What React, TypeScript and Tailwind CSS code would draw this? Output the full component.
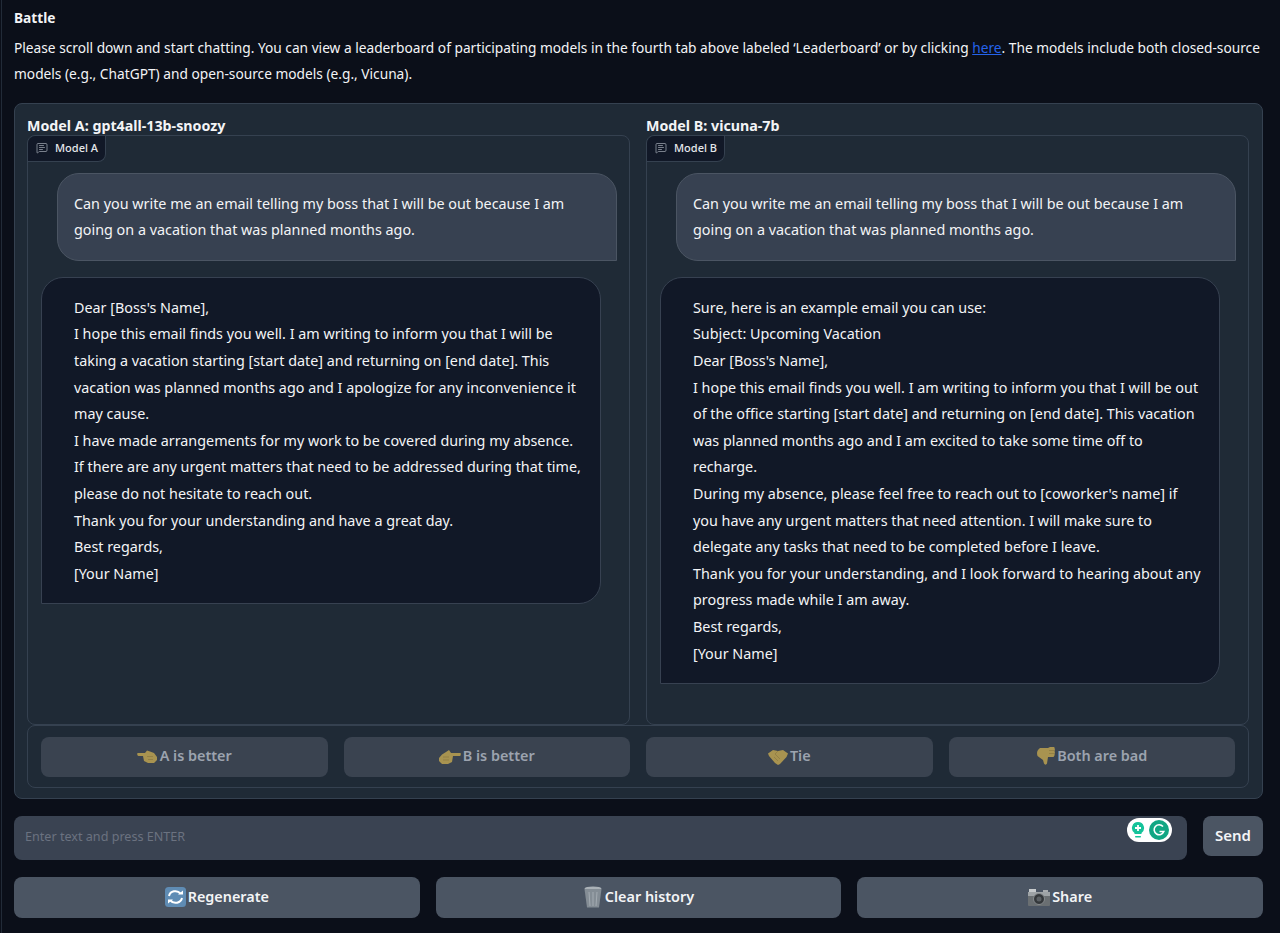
import { MessageSquareText } from "lucide-react";

const userLines = [
  "Can you write me an email telling my boss that I will be out because I am",
  "going on a vacation that was planned months ago.",
];

const linesA = [
  "Dear [Boss's Name],",
  "I hope this email finds you well. I am writing to inform you that I will be",
  "taking a vacation starting [start date] and returning on [end date]. This",
  "vacation was planned months ago and I apologize for any inconvenience it",
  "may cause.",
  "I have made arrangements for my work to be covered during my absence.",
  "If there are any urgent matters that need to be addressed during that time,",
  "please do not hesitate to reach out.",
  "Thank you for your understanding and have a great day.",
  "Best regards,",
  "[Your Name]",
];

const linesB = [
  "Sure, here is an example email you can use:",
  "Subject: Upcoming Vacation",
  "Dear [Boss's Name],",
  "I hope this email finds you well. I am writing to inform you that I will be out",
  "of the office starting [start date] and returning on [end date]. This vacation",
  "was planned months ago and I am excited to take some time off to",
  "recharge.",
  "During my absence, please feel free to reach out to [coworker's name] if",
  "you have any urgent matters that need attention. I will make sure to",
  "delegate any tasks that need to be completed before I leave.",
  "Thank you for your understanding, and I look forward to hearing about any",
  "progress made while I am away.",
  "Best regards,",
  "[Your Name]",
];

function HandLeft() {
  return (
    <svg width="21" height="18" viewBox="0 0 21 18">
      <path d="M0.500 5h7.500l2-2.500 3 1 4 1.500 3 4v3l-3 3h-6l-4-2-1-5H1.500C0 8 0 5.500 0.500 5z" fill="#a89350" />
      <path d="M10 8.500h6M11 11.500h5" stroke="#8a7840" strokeWidth="0.700" />
    </svg>
  );
}

function HandRight() {
  return (
    <svg width="22" height="18" viewBox="0 0 22 18">
      <path d="M21.500 5h-9.500l-2-3-3 2-4 2.500L0 10v3l3 3h6l4-2 1-6h7c1 0 1-3 .5-3z" fill="#a89350" />
      <path d="M4 9h6M4 12h6" stroke="#8a7840" strokeWidth="0.700" />
    </svg>
  );
}

function Handshake() {
  return (
    <svg width="20" height="17" viewBox="0 0 20 17">
      <path d="M0 5.500l5-3.500 5 1 5-1 5 3.500-1.500 3.500-6.500 7-2 1-3-2-6-7z" fill="#a89350" />
      <path d="M7 6l5 5M6 9l4 4M10 3L7 6" stroke="#8a7840" strokeWidth="0.700" fill="none" />
    </svg>
  );
}

function ThumbDown() {
  return (
    <svg width="19" height="19" viewBox="0 0 19 19">
      <path d="M4 1h8l2-1h3.500c1 0 1 .5 1 1 .500 1 .500 2 0 3 .500 1 .500 2 0 3 .500 1 0 2-1 3h-5.500l-1 6.500c-.500 1.500-2.500 1.500-3 0L7 13 1.500 9C.500 6 1 3 4 1z" fill="#a89350" />
      <path d="M13 3.500h5M13 6.500h5" stroke="#8a7840" strokeWidth="0.700" />
    </svg>
  );
}

function RefreshEmoji() {
  return (
    <svg width="21" height="20" viewBox="0 0 21 20">
      <rect x="0" y="0" width="21" height="20" rx="3.500" fill="#5f8cb4" />
      <path d="M4 9a6.500 6 0 0 1 11.500-2.500" stroke="#fff" strokeWidth="2" fill="none" />
      <path d="M17 11a6.500 6 0 0 1-11.500 2.500" stroke="#fff" strokeWidth="2" fill="none" />
      <path d="M13 7.500h5V3.500zM8 12.500H3v4z" fill="#fff" />
    </svg>
  );
}

function TrashEmoji() {
  return (
    <svg width="20" height="22" viewBox="0 0 20 22">
      <ellipse cx="10" cy="2.500" rx="8.500" ry="2" fill="#aab1b7" />
      <path d="M1.500 3l2.500 18.500h12L18.500 3z" fill="#848d95" />
      <path d="M6 6l1 14M10 6v14M14 6l-1 14" stroke="#a3abb2" strokeWidth="1" />
    </svg>
  );
}

function CameraEmoji() {
  return (
    <svg width="22" height="17" viewBox="0 0 22 17">
      <rect x="0" y="3" width="22" height="14" rx="1" fill="#6a6f72" />
      <rect x="0" y="3" width="22" height="4" fill="#9ea3a6" />
      <rect x="1" y="0" width="7" height="3" fill="#c6cacc" />
      <rect x="15" y="1" width="5" height="2" fill="#a8acaf" />
      <circle cx="11" cy="10" r="5.500" fill="#34383b" stroke="#878c8f" strokeWidth="1" />
      <circle cx="11" cy="10" r="2.500" fill="#5c6165" />
    </svg>
  );
}

function ChatPanel({ label, lines }: { label: string; lines: string[] }) {
  return (
    <div className="relative h-[590px] rounded-lg border border-[#354150] pl-[13px] pr-[12px] pt-[37px]">
      <div className="absolute left-0 top-0 flex h-[26px] w-[78px] items-center gap-[7px] rounded-br-lg rounded-tl-lg border-b border-r border-[#354150] bg-[#111827] pl-[8px] text-[11px] font-medium text-[#e5e7eb]">
        <MessageSquareText size={12} strokeWidth={1.5} className="text-[#9ca3af]" />
        {label}
      </div>
      <div className="ml-[16px] rounded-[22px] rounded-br-none border border-[#4b5563] bg-[#374151] pb-[16px] pl-[16px] pt-[17px] text-[#f3f4f6]">
        {userLines.map((l) => (
          <div key={l} className="whitespace-nowrap">{l}</div>
        ))}
      </div>
      <div className="mr-[16px] mt-[16px] rounded-[22px] rounded-bl-none border border-[#374151] bg-[#111827] pb-[16px] pl-[32px] pt-[17px] text-[#f3f4f6]">
        {lines.map((l) => (
          <div key={l} className="whitespace-nowrap">{l}</div>
        ))}
      </div>
    </div>
  );
}

function VoteButton({ icon, text }: { icon: React.ReactNode; text: string }) {
  return (
    <button className="flex h-10 items-center justify-center gap-[2px] rounded-lg bg-[#3a4350] text-[14.4px] font-semibold text-[#9ca3af]">
      {icon}
      {text}
    </button>
  );
}

function ActionButton({ icon, text }: { icon: React.ReactNode; text: string }) {
  return (
    <button className="flex h-[41px] items-center justify-center gap-[2px] rounded-lg bg-[#4b5563] text-[14.4px] font-semibold text-[#f3f4f6]">
      {icon}
      {text}
    </button>
  );
}

export default function App() {
  return (
    <div
      className="h-[933px] w-[1280px] overflow-hidden bg-[#0b0f19] pl-px text-[14.35px] leading-[26.6px] text-[#f3f4f6]"
      style={{ fontFamily: '"Noto Sans", sans-serif' }}
    >
      <div className="h-full border-l border-[#222b38] pl-[12px] pr-[17px] pt-[5px]">
        <div className="text-[13.7px] font-bold text-[#f3f4f6]">Battle</div>
        <p className="mt-[3px] h-[68px] whitespace-nowrap text-[13.73px]">
          Please scroll down and start chatting. You can view a leaderboard of participating models in the fourth tab above labeled ‘Leaderboard’ or by clicking{" "}
          <a className="text-[#2563eb] underline">here</a>. The models include both closed-source
          <br />
          models (e.g., ChatGPT) and open-source models (e.g., Vicuna).
        </p>

        <div className="h-[696px] rounded-lg border border-[#354150] bg-[#1f2a36] pl-[12px] pr-[13px] pt-[11px]">
          <div className="grid grid-cols-2 gap-4">
            <div>
              <div className="h-[20px] text-[14.25px] font-bold leading-[21px]">Model A: gpt4all-13b-snoozy</div>
              <ChatPanel label="Model A" lines={linesA} />
            </div>
            <div>
              <div className="h-[20px] text-[14.25px] font-bold leading-[21px]">Model B: vicuna-7b</div>
              <ChatPanel label="Model B" lines={linesB} />
            </div>
          </div>
          <div className="grid h-[63px] grid-cols-4 items-start gap-4 rounded-lg border border-[#354150] px-[13px] pt-[11px]">
            <VoteButton icon={<HandLeft />} text="A is better" />
            <VoteButton icon={<HandRight />} text="B is better" />
            <VoteButton icon={<Handshake />} text="Tie" />
            <VoteButton icon={<ThumbDown />} text="Both are bad" />
          </div>
        </div>

        <div className="mt-[17px] flex items-start gap-4">
          <div className="relative flex h-[44px] flex-1 items-center rounded-lg bg-[#3a4352] pl-[11px] text-[12.6px] text-[#6b7280]">
            Enter text and press ENTER
            <div className="absolute right-[15px] top-[2px] flex h-[24px] w-[45px] items-center justify-center gap-[4px] rounded-full bg-white">
              <svg width="14" height="18" viewBox="0 0 14 18">
                <path d="M7 1a6 6 0 0 0-3.500 10.900V13h7v-1.100A6 6 0 0 0 7 1z" fill="#15c39a" />
                <path d="M7 4v6M4 7h6" stroke="#fff" strokeWidth="1.800" />
                <rect x="4" y="15" width="6" height="1.500" rx="0.700" fill="#15c39a" />
              </svg>
              <svg width="20" height="20" viewBox="0 0 20 20">
                <circle cx="10" cy="10" r="10" fill="#11a683" />
                <path d="M14 6.500a5 5 0 1 0 .8 5H10.500" stroke="#fff" strokeWidth="1.600" fill="none" />
              </svg>
            </div>
          </div>
          <button className="h-10 w-[60px] rounded-lg bg-[#4b5563] text-[15px] font-semibold">Send</button>
        </div>

        <div className="mt-[17px] grid grid-cols-3 gap-4">
          <ActionButton icon={<RefreshEmoji />} text="Regenerate" />
          <ActionButton icon={<TrashEmoji />} text="Clear history" />
          <ActionButton icon={<CameraEmoji />} text="Share" />
        </div>
      </div>
    </div>
  );
}
